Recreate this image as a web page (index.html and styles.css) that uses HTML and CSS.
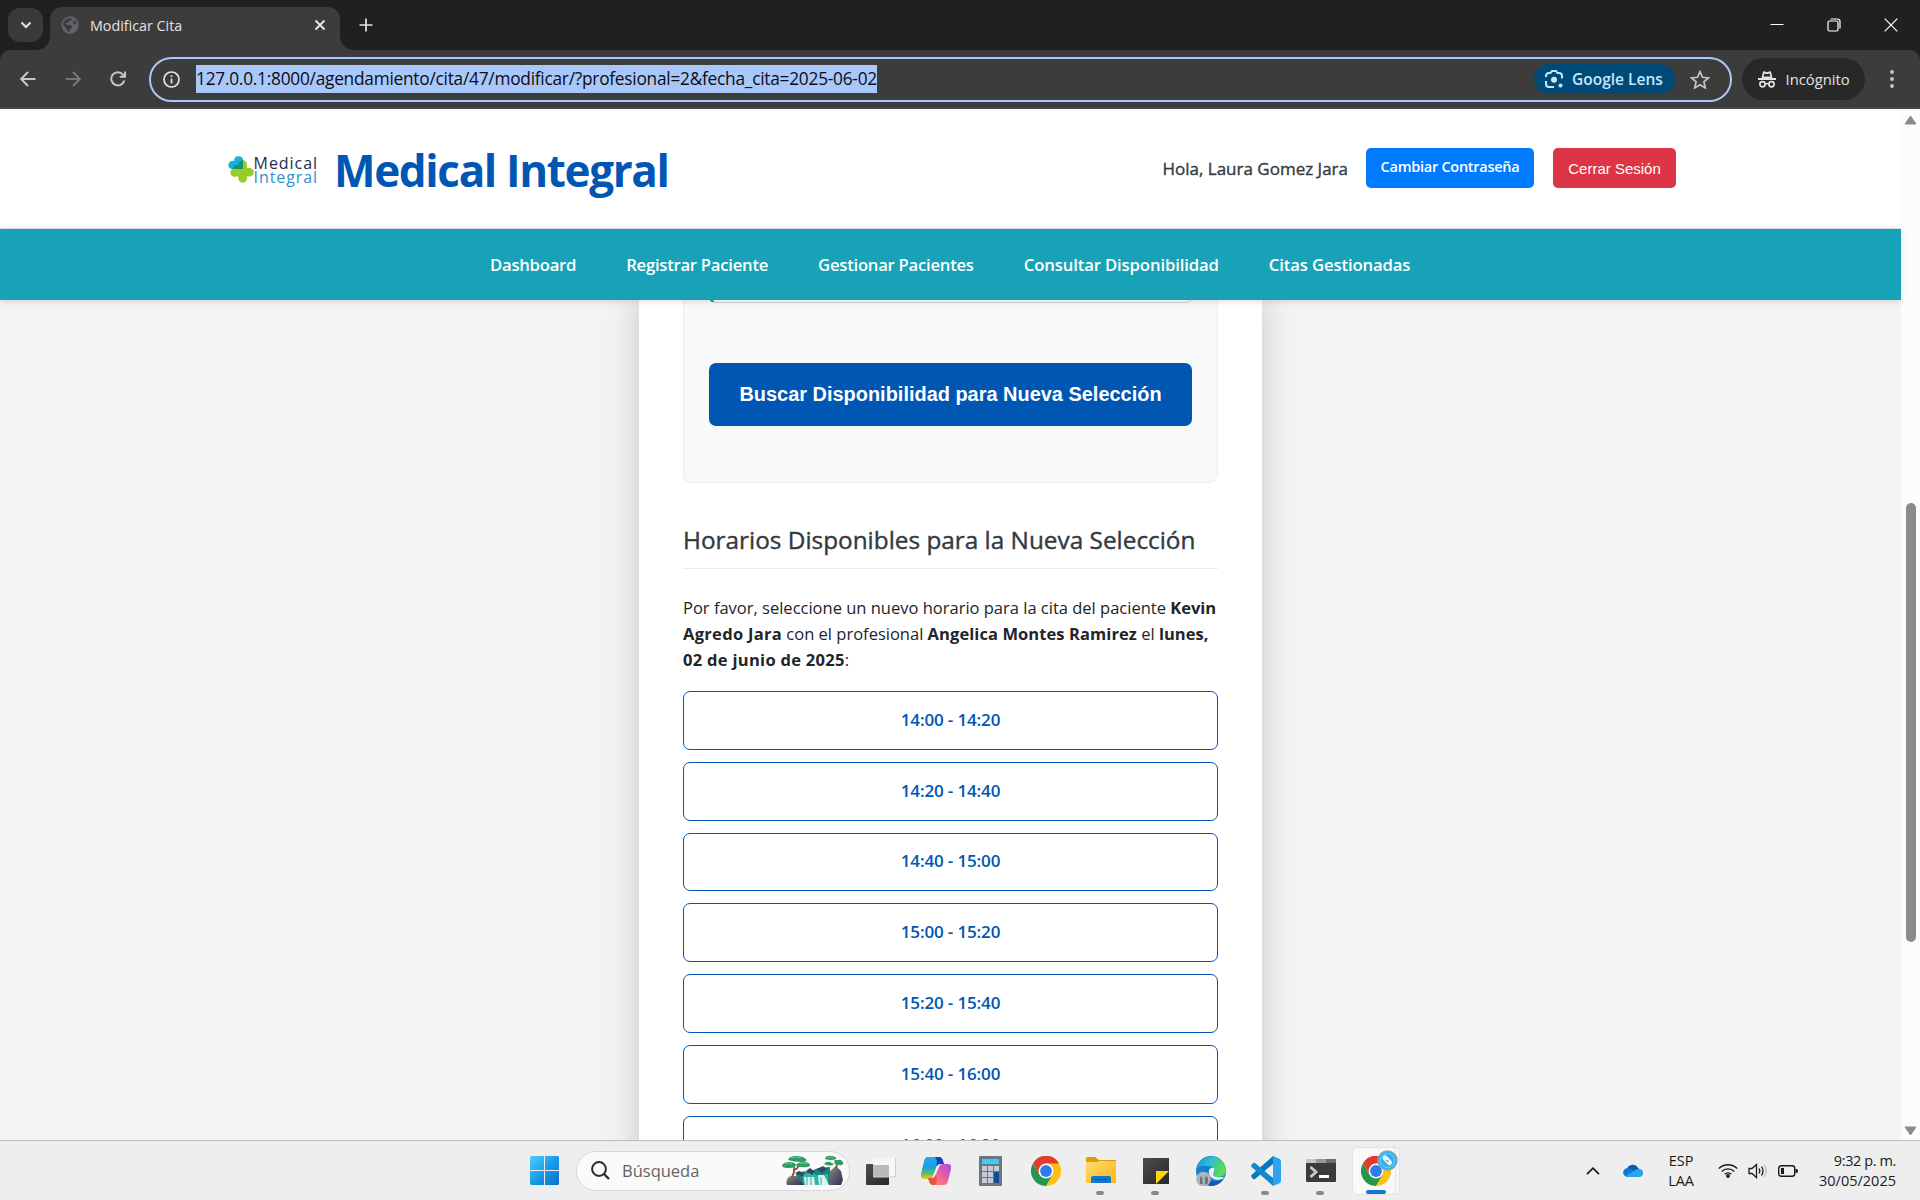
FILE: index.html
```html
<!DOCTYPE html>
<html lang="es">
<head>
<meta charset="utf-8">
<title>Modificar Cita</title>
<link rel="stylesheet" href="styles.css">
</head>
<body>
<svg width="0" height="0" class="defs">
  <defs>
    <linearGradient id="gWin" x1="0" y1="0" x2="1" y2="1"><stop offset="0" stop-color="#4fd0fd"/><stop offset=".5" stop-color="#1a9bea"/><stop offset="1" stop-color="#0470cc"/></linearGradient>
    <linearGradient id="gFold" x1="0" y1="0" x2="1" y2="1"><stop offset="0" stop-color="#ffdc6e"/><stop offset="1" stop-color="#fcb61a"/></linearGradient>
    <linearGradient id="gCopA" x1="0" y1="0" x2="0" y2="1"><stop offset="0" stop-color="#1fa8f5"/><stop offset=".45" stop-color="#1c9ee0"/><stop offset=".75" stop-color="#5cba6a"/><stop offset="1" stop-color="#f0cf1a"/></linearGradient>
    <linearGradient id="gCopB" x1="1" y1="0" x2="0" y2="1"><stop offset="0" stop-color="#a44cf0"/><stop offset=".5" stop-color="#f0609a"/><stop offset="1" stop-color="#ffa04a"/></linearGradient>
    <linearGradient id="gEdge" x1="0" y1="0" x2="1" y2=".3"><stop offset="0" stop-color="#1c93d8"/><stop offset=".5" stop-color="#2cc0d0"/><stop offset="1" stop-color="#5bdc50"/></linearGradient>
    <linearGradient id="gDark" x1="0" y1="0" x2="1" y2="1"><stop offset="0" stop-color="#4e4e4e"/><stop offset="1" stop-color="#262626"/></linearGradient>
    <linearGradient id="gRock" x1="0" y1="0" x2="1" y2="1"><stop offset="0" stop-color="#8a9a70"/><stop offset=".5" stop-color="#5c5870"/><stop offset="1" stop-color="#2e3050"/></linearGradient>
    <symbol id="chrome" viewBox="0 0 30 30">
      <path d="M15 15 2 7.5A15 15 0 0 1 28 7.5Z" fill="#e33b2e"/>
      <path d="M15 15V0A15 15 0 0 1 28 7.5 15 15 0 0 1 15 30L21.5 18.7Z" fill="#fdc013"/>
      <path d="M15 7.5H28A15 15 0 0 0 2 7.5L8.5 18.7 15 15Z" fill="#e33b2e"/>
      <path d="M2 7.5A15 15 0 0 0 15 30L21.5 18.7 15 15 8.5 18.7Z" fill="#24974a"/>
      <circle cx="15" cy="15" r="7.4" fill="#fff"/><circle cx="15" cy="15" r="5.9" fill="#2f7bed"/>
    </symbol>
  </defs>
</svg>

<div class="tabstrip">
  <button class="tab-search"><svg width="12" height="8" viewBox="0 0 12 8"><path d="M1.500 1.500 6 6l4.500-4.500" class="ln light w2"/></svg></button>
  <div class="tab">
    <svg class="favicon" width="18" height="18" viewBox="0 0 18 18"><circle cx="9" cy="9" r="8.700" fill="#5f6368"/><path d="M9 2c3 .5 2 3 0 3s-1 2-3 2-1 2 1 2 4 0 4 2-2 1-2 3-2 2-3 .5S5 12 4 11 2 9 2 8a7 7 0 0 1 7-6ZM13 4l2.500 2.500c0 2-3 2-3.500 0Z" fill="#3c3c3c"/></svg>
    <span class="tab-title">Modificar Cita</span>
    <svg class="tab-close" width="12" height="12" viewBox="0 0 12 12"><path d="m1.500 1.500 9 9m0-9-9 9" class="ln light w2"/></svg>
  </div>
  <svg class="new-tab" width="14" height="14" viewBox="0 0 14 14"><path d="M7 .5v13M.5 7h13" class="ln light w17"/></svg>
  <div class="window-buttons">
    <svg width="14" height="14" viewBox="0 0 14 14"><path d="M.5 6.500h13" stroke="#fff"/></svg>
    <svg width="14" height="14" viewBox="0 0 14 14" fill="none" stroke="#fff"><rect x="1" y="3" width="10" height="10" rx="1.500" stroke-width="1.200"/><path d="M3.500 1h7a2.500 2.500 0 0 1 2.500 2.500v7" stroke-width="1.200"/></svg>
    <svg width="14" height="14" viewBox="0 0 14 14"><path d="m.7.7 12.600 12.600M13.300.7.7 13.300" stroke="#fff" stroke-width="1.200"/></svg>
  </div>
</div>

<div class="toolbar-wrap">
<div class="toolbar">
  <svg class="nav-icon" width="16" height="16" viewBox="0 0 16 16"><path d="M15.500 8H1.500M8 1 1.200 8 8 15" class="ln soft w2"/></svg>
  <svg class="nav-icon" width="16" height="16" viewBox="0 0 16 16"><path d="M.5 8h14M8 1l6.800 7L8 15" class="ln dim w2"/></svg>
  <svg class="nav-icon" width="16" height="16" viewBox="0 0 16 16"><path d="M14.300 9.500A6.600 6.600 0 1 1 13 3.600L14.700 5.500M15 .5v5.300H9.700" class="ln soft w2"/></svg>
  <div class="omnibox">
    <svg class="info" width="17" height="17" viewBox="0 0 17 17"><circle cx="8.500" cy="8.500" r="7.500" class="ln light w17"/><path d="M8.500 7.500v5M8.500 4.300v1.800" class="ln light w17"/></svg>
    <span class="url">127.0.0.1:8000/agendamiento/cita/47/modificar/?profesional=2&amp;fecha_cita=2025-06-02</span>
    <div class="lens">
      <svg width="18" height="18" viewBox="0 0 18 18"><path d="M1 7V5.500A3 3 0 0 1 4 3h1.500L7 1h4l1.500 2H14a3 3 0 0 1 3 3v2.500M1 11v3a3 3 0 0 0 3 3h5" fill="none" stroke="#c2e7ff" stroke-width="2"/><circle cx="9" cy="9.700" r="3" fill="#c2e7ff"/><circle cx="15.500" cy="15.500" r="2" fill="#c2e7ff"/></svg>
      <span class="lens-label">Google Lens</span>
    </div>
    <svg class="star" width="20" height="19" viewBox="0 0 20 19"><path d="m10 1.700 2.500 5.600 6 .6-4.600 4 1.400 6L10 14.800 4.700 17.900l1.400-6-4.600-4 6-.6Z" fill="none" stroke="#c7c7c7" stroke-width="1.700"/></svg>
  </div>
  <div class="incognito">
    <svg width="18" height="17" viewBox="0 0 18 17"><path d="M3.500 7 5 .8q.3-.8 1.200-.5L9 1.200l2.800-.9q.9-.3 1.200.5L14.500 7Z" fill="#e3e3e3"/><path d="M6.300 2.500 9 3.300l2.700-.8.700 3H5.600Z" fill="#282828"/><path d="M0 8h18" stroke="#e3e3e3" stroke-width="2"/><circle cx="4.500" cy="13.300" r="2.600" fill="none" stroke="#e3e3e3" stroke-width="1.700"/><circle cx="13.500" cy="13.300" r="2.600" fill="none" stroke="#e3e3e3" stroke-width="1.700"/><path d="M7 13q2-1.200 4 0" fill="none" stroke="#e3e3e3" stroke-width="1.500"/></svg>
    <span class="inc-label">Incógnito</span>
  </div>
  <svg class="kebab" width="4" height="18" viewBox="0 0 4 18" fill="#c7c7c7"><circle cx="2" cy="2" r="1.900"/><circle cx="2" cy="9" r="1.900"/><circle cx="2" cy="16" r="1.900"/></svg>
</div>
</div>

<div class="viewport">
  <div class="page">
    <header class="site-header">
      <svg class="logo" width="90" height="38" viewBox="0 0 90 38">
        <g transform="translate(0 3.500)">
          <path d="M14 6q5 1 5 6v2.500h2.500a4.300 4.300 0 0 1 0 8.600H19V25a4.300 4.300 0 0 1-8.600 0v-2H8.500A4.200 4.200 0 0 1 5 15h9Z" fill="#95ce28"/>
          <path d="M6 7.500a4.600 4.600 0 0 1 9-1.500v9.500H4.500A4.300 4.300 0 0 1 .3 11.500 4.300 4.300 0 0 1 6 7.500Z" fill="#13b2de"/>
          <path d="M10.500 11q0-4 4.500-4v8.500H5q0-4.500 5.500-4.500Z" fill="#17936c"/>
        </g>
        <text x="25.600" y="19" class="logo-text" fill="#262b4c" textLength="63.500">Medical</text>
        <text x="25.600" y="33" class="logo-text" fill="#3191d2" textLength="63.500">Integral</text>
      </svg>
      <h1>Medical Integral</h1>
      <span class="hello">Hola, Laura Gomez Jara</span>
      <a class="btn btn-blue">Cambiar Contraseña</a>
      <button class="btn btn-red">Cerrar Sesión</button>
    </header>
    <nav class="site-nav">
      <a>Dashboard</a><a>Registrar Paciente</a><a>Gestionar Pacientes</a><a>Consultar Disponibilidad</a><a>Citas Gestionadas</a>
    </nav>
    <main class="main">
      <section class="card">
        <div class="form-box">
          <div class="field"></div>
          <button class="submit">Buscar Disponibilidad para Nueva Selección</button>
        </div>
        <h2>Horarios Disponibles para la Nueva Selección</h2>
        <p class="intro">Por favor, seleccione un nuevo horario para la cita del paciente <b>Kevin</b><br><b class="wide">Agredo Jara</b> con el profesional <b class="name">Angelica Montes Ramirez</b> el <b>lunes,</b><br><b class="wide">02 de junio de 2025</b>:</p>
        <div class="slots">
          <a class="slot">14:00 - 14:20</a>
          <a class="slot">14:20 - 14:40</a>
          <a class="slot">14:40 - 15:00</a>
          <a class="slot">15:00 - 15:20</a>
          <a class="slot">15:20 - 15:40</a>
          <a class="slot">15:40 - 16:00</a>
          <a class="slot">16:00 - 16:20</a>
        </div>
      </section>
    </main>
  </div>
  <div class="scrollbar">
    <svg width="13" height="10" viewBox="0 0 13 10"><path d="M6.500 1 12 9H1Z" fill="#8b8b8b" stroke="#8b8b8b" stroke-linejoin="round"/></svg>
    <div class="thumb"></div>
    <svg width="13" height="10" viewBox="0 0 13 10"><path d="M6.500 9 12 1H1Z" fill="#8b8b8b" stroke="#8b8b8b" stroke-linejoin="round"/></svg>
  </div>
</div>

<footer class="taskbar">
  <div class="app"><svg width="29" height="29" viewBox="0 0 29 29"><path d="M1 0h13v14H0V1ZM15 0h13l1 1v13H15ZM0 15h14v14H1l-1-1ZM15 15h14v13l-1 1H15Z" fill="url(#gWin)"/></svg></div>
  <div class="search">
    <svg width="19" height="19" viewBox="0 0 19 19"><circle cx="8" cy="8" r="6.900" fill="none" stroke="#2a2a2a" stroke-width="2"/><path d="m13 13 5 5" stroke="#2a2a2a" stroke-width="2.400"/></svg>
    <span class="search-label">Búsqueda</span>
    <svg class="scene" width="62" height="32" viewBox="0 0 62 32">
      <path d="M14 19q6-4 13-2l9-4 12-1v18H14Z" fill="#16877c"/>
      <path d="M20 20l10-3 6 4 10-2v11H22Z" fill="#2fb5a4"/>
      <path d="M22 22h10l1 8H23ZM36 20h6l5 10H37Z" fill="#dcf5f4"/>
      <path d="M25 22v8m4-8v8m10-8v8" stroke="#3fa79f"/>
      <path d="M13 18l4-2 5 2-1 4ZM24 16l4-3 5 4-3 3ZM35 14l6-3 4 3-5 4Z" fill="#384560"/>
      <path d="M5 30q-2-7 4-9l6 0 7 9Z" fill="url(#gRock)"/>
      <path d="M47 30l1-14 6-5 5 5 2 9-2 5Z" fill="url(#gRock)"/>
      <path d="M10 22q4-7 1-14M11 15q4 0 6-5M54 13q2-3-1-8" stroke="#7e4a30" stroke-width="1.700" fill="none"/>
      <path d="M6 5Q7 1 14 1t10 3q2 3-5 3T6 5ZM0 11q1-4 7-4t7 3q-1 3-7 3T0 11ZM14 10q2-3 8-3t6 4q-4 2-8 1-6 0-6-2ZM43 4q1-4 7-3 5 1 4 3-5 2-11 0ZM42 9q2-3 6-2l4 2q-3 3-10 0ZM52 8q2-4 7-3 4 3 1 5-5 1-8-2Z" fill="#2e9d63"/>
      <path d="M9 3q5-2 10 0M3 9q4-2 7 0M18 9q4-2 7 0M46 3q3-2 5 0" stroke="#65c98a" fill="none"/>
    </svg>
  </div>
  <div class="app"><svg width="30" height="28" viewBox="0 0 30 28"><rect x="0" y="7" width="23" height="21" rx="1" fill="url(#gDark)"/><path d="M7 1h22v19H7Z" fill="#f6f6f6"/><path d="M7 8h16v12H7Z" fill="#bababa"/><path d="M7 20h22v-.5M29.500 1v19" stroke="#cfcfcf" fill="none"/></svg></div>
  <div class="app"><svg width="30" height="28" viewBox="0 0 30 28"><path d="M7 0h11q3 0 4 4l1 3h-4q-3 0-4 4l-3 8q-1 3-4 3H3q-4 0-3-5L3 4Q4 0 7 0Z" fill="url(#gCopA)"/><path d="M14 0h4q3 0 4 4l1 3h-4q-2 0-3 2-1-2 0-5Z" fill="#1840b8"/><path d="M23 28H12q-3 0-4-4l-1-3h4q3 0 4-4l3-7q1-3 4-3h5q4 0 3 5l-3 12q-1 4-4 4Z" fill="url(#gCopB)"/><path d="M7 21h4q3 0 4-4l1 8-2 3h-2q-3 0-4-4Z" fill="#ee5340"/></svg></div>
  <div class="app"><svg width="23" height="30" viewBox="0 0 23 30"><rect width="23" height="30" rx="1" fill="#6b7683"/><path d="M3 3h17v5H3Z" fill="#3fcdf8"/><path d="M3 10h5v5H3Zm6 0h5v5H9Zm6 0h5v5h-5ZM3 16h5v5H3Zm6 0h5v5H9ZM3 22h5v5H3Zm6 0h5v5H9Z" fill="#c6cdd6"/><path d="M15 16h5v11h-5Z" fill="#124e93"/></svg></div>
  <div class="app"><svg width="30" height="30"><use href="#chrome"/></svg></div>
  <div class="app open"><svg width="30" height="27" viewBox="0 0 30 27"><path d="M0 1.500Q0 0 1.500 0H9l4 3h16q1 0 1 1v4H0Z" fill="#dd9a0c"/><path d="M0 5h11l2-1h17v22H0Z" fill="url(#gFold)"/><path d="M5 26v-5q0-2 2-2h16q2 0 2 2v5Z" fill="#1277cd"/><path d="M9 22.500h12" stroke="#0b4f96"/></svg></div>
  <div class="app open"><svg width="26" height="26" viewBox="0 0 26 26"><path d="M0 0h26v26H0Z" fill="url(#gDark)"/><path d="M13 13h13L13 26Z" fill="#fdd50b"/></svg></div>
  <div class="app"><svg width="30" height="30" viewBox="0 0 30 30"><circle cx="15" cy="15" r="15" fill="#1681cf"/><path d="M.5 12A15 15 0 0 1 30 14q0 7-8 7-5 0-5-2 2-2 1-5-1-4-6-4Q4 9 .5 12Z" fill="url(#gEdge)"/><path d="M12 12q-5 5 0 11 6 5 15 0l-1 2Q19 32 11 29 2 20 12 12Z" fill="#1358ae"/><path d="M13 14q2-3 5-2 1 3-1 7 2 3 9 2 2 0 2 1-7 4-12 0-4-3-3-8Z" fill="#eee"/><circle cx="7.500" cy="23" r="7.300" fill="#aab4bb"/><path d="M4 28v-6l1-2 1.500 2v6Zm5 1v-7l1.500-2 1.500 2v5Z" fill="#68737c"/></svg></div>
  <div class="app open"><svg width="30" height="30" viewBox="0 0 30 30"><path d="M22 0v8L4 23q-1 .5-2 0l-1.500-2q-.7-1 0-2Z" fill="#0877bd"/><path d="M22 30v-8L4 7q-1-.5-2 0L.5 9q-.7 1 0 2Z" fill="#1188cf"/><path d="M22 0l6 2.500q2 1 2 3v19q0 2-2 3L22 30Z" fill="#2ba3f2"/></svg></div>
  <div class="app open"><svg width="30" height="23" viewBox="0 0 30 23"><rect width="30" height="23" rx="1" fill="#3b3b3b"/><path d="M0 0h10v4H0Z" fill="#c4c4c4"/><path d="M10 0h10v4H10Z" fill="#999"/><path d="M20 0h10v4H20Z" fill="#6d6d6d"/><path d="m4.500 8 5.500 5-5.500 5" stroke="#ccc" stroke-width="2.800" fill="none"/><path d="M13 17.500h10" stroke="#fff" stroke-width="3"/></svg></div>
  <div class="app active">
    <svg width="30" height="30"><use href="#chrome"/></svg>
    <svg class="profile" width="21" height="21" viewBox="0 0 21 21"><circle cx="10.500" cy="10.500" r="9.500" fill="#2fb0ee" stroke="#7fa9c2" stroke-width="1.500"/><circle cx="10.500" cy="10.500" r="7" fill="none" stroke="#7fd2fa"/><path d="m8 8 4.500 4.500" stroke="#eafaff" stroke-width="5" stroke-linecap="round"/><path d="M9.500 10.300l1.500 1" stroke="#2a93d0" stroke-width="1.200" stroke-linecap="round"/></svg>
  </div>
  <div class="tray">
    <svg class="chev" width="14" height="8" viewBox="0 0 14 8"><path d="M1 7.200 7 1.200l6 6" fill="none" stroke="#1b1b1b" stroke-width="1.700"/></svg>
    <svg class="cloud" width="20" height="13" viewBox="0 0 20 13"><path d="M4 5a6 6 0 0 1 11-1l1.500 1-10 5Z" fill="#0a5cb4"/><path d="M4.500 13A4.500 4.500 0 1 1 6 4.200L14 9l-4 4Z" fill="#0f7ad4"/><path d="M3 12l9-6q2-1 4-1a4 4 0 0 1 0 8H5Z" fill="#27a4ea"/></svg>
    <div class="lang"><span>ESP</span><span>LAA</span></div>
    <svg class="wifi" width="20" height="15" viewBox="0 0 20 15"><path d="M.8 5.500a13 13 0 0 1 18.400 0M3.800 8.500a8.700 8.700 0 0 1 12.400 0M6.700 11.300a4.700 4.700 0 0 1 6.600 0" fill="none" stroke="#1b1b1b" stroke-width="1.400"/><circle cx="10" cy="13" r="1.900" fill="#1b1b1b"/></svg>
    <svg class="vol" width="20" height="16" viewBox="0 0 20 16" fill="none" stroke="#1b1b1b" stroke-width="1.300"><path d="M1 5.500h3l4.500-4v13l-4.500-4H1ZM11 5.500q1.700 2.500 0 5M13.500 3.500q3 4.500 0 9"/><path d="M16 1.500q4.500 6.500 0 13" stroke="#bdbdbd"/></svg>
    <svg class="bat" width="20" height="12" viewBox="0 0 20 12"><rect x=".7" y=".7" width="16" height="10.600" rx="2.500" fill="none" stroke="#1b1b1b" stroke-width="1.400"/><path d="M3 3h3v6H3ZM17.500 4h1q1.500 0 1.500 2t-1.500 2h-1Z" fill="#1b1b1b"/></svg>
    <div class="clock"><span class="time">9:32 p. m.</span><span>30/05/2025</span></div>
  </div>
</footer>
</body>
</html>
```
FILE: styles.css
```css
* { box-sizing: border-box; }

html, body { height: 100%; }

body {
  margin: 0;
  display: flex;
  flex-direction: column;
  overflow: hidden;
  width: 1920px;
  height: 1200px;
  background: #f3f3f3;
  color: #212529;
  font-family: "Open Sans", "Noto Sans", sans-serif;
}

button { border: 0; padding: 0; }
svg { display: block; flex: none; }
span, a, h1, h2, button { white-space: nowrap; }
.defs { position: absolute; }

.ln { fill: none; }
.light { stroke: #e3e3e3; }
.soft { stroke: #c7c7c7; }
.dim { stroke: #757575; }
.w2 { stroke-width: 2; }
.w17 { stroke-width: 1.7; }

/* Browser chrome */
.tabstrip {
  flex: none;
  display: flex;
  align-items: center;
  height: 50px;
  padding-left: 8px;
  background: #1f2120;
}
.tab-search {
  display: grid;
  place-items: center;
  width: 35px;
  height: 34px;
  border-radius: 12px;
  background: #3a3a3a;
}
.tab {
  position: relative;
  align-self: flex-end;
  display: flex;
  align-items: center;
  width: 290px;
  height: 43px;
  margin-left: 7px;
  padding: 0 14px 7px 11px;
  border-radius: 12px 12px 0 0;
  background: #3c3c3c;
}
.tab::before, .tab::after {
  content: "";
  position: absolute;
  bottom: 0;
  width: 13px;
  height: 13px;
}
.tab::before { left: -13px; background: radial-gradient(circle at 0 0, transparent 12.500px, #3c3c3c 13px); }
.tab::after { right: -13px; background: radial-gradient(circle at 100% 0, transparent 12.500px, #3c3c3c 13px); }
.tab-title { margin-left: 11px; font-size: 14.300px; color: #e3e3e3; }
.tab-close { margin-left: auto; }
.new-tab { margin-left: 18.500px; }
.window-buttons { display: flex; gap: 43px; margin-left: auto; padding-right: 22px; }

.toolbar-wrap { flex: none; background: #1f2120; }
.toolbar {
  display: flex;
  align-items: center;
  height: 59px;
  padding: 1px 22px 0 20px;
  border-radius: 11px 11px 0 0;
  border-bottom: 2px solid #484848;
  background: #3c3c3c;
}
.nav-icon { margin-right: 29px; }
.omnibox {
  display: flex;
  align-items: center;
  width: 1583px;
  height: 45px;
  margin-left: -6px;
  padding-right: 20px;
  padding-left: 12px;
  border: 2px solid #a8c7fa;
  border-radius: 23px;
}
.url {
  height: 28px;
  margin-left: 16px;
  background: #a8c7fa;
  color: #0d0d12;
  font-size: 17.300px;
  letter-spacing: -.243px;
  line-height: 28px;
}
.lens {
  display: flex;
  align-items: center;
  gap: 9px;
  height: 30px;
  width: 141px;
  margin-left: auto;
  padding-left: 11px;
  border-radius: 15px;
  background: #004a77;
  color: #c2e7ff;
}
.lens-label { font-size: 15.500px; font-weight: 600; }
.star { margin-left: 15px; }
.incognito {
  display: flex;
  align-items: center;
  gap: 9.500px;
  width: 123px;
  height: 42px;
  margin-left: 10px;
  padding-left: 16px;
  border-radius: 21px;
  background: #282828;
  color: #e3e3e3;
}
.inc-label { font-size: 14.800px; }
.kebab { margin-left: auto; margin-right: 4px; }

/* Page */
.viewport { flex: 1; min-height: 0; display: flex; }
.page { display: flex; flex-direction: column; width: 1901px; }

.site-header {
  flex: none;
  display: flex;
  align-items: center;
  height: 120px;
  padding: 0 225px 0 228px;
  border-bottom: 1px solid #dee2e6;
  background: #fff;
}
.logo-text { font: 400 16px "Open Sans", sans-serif; }
h1 {
  margin: 3px 0 0 16px;
  color: #0056b3;
  font-size: 44px;
  font-weight: 700;
  letter-spacing: -1.350px;
  line-height: 60px;
}
.hello {
  margin-left: auto;
  color: #343a40;
  font-size: 17px;
  -webkit-text-stroke: .35px #343a40;
}
.btn {
  display: flex;
  align-items: center;
  justify-content: center;
  height: 40px;
  margin-top: -2px;
  border-radius: 5px;
  color: #fff;
}
.btn-blue {
  width: 168px;
  margin-left: 18px;
  padding-bottom: 3px;
  background: #007bff;
  font-size: 14.500px;
  font-weight: 600;
  letter-spacing: -.27px;
}
.btn-red { width: 123px; margin-left: 19px; padding-top: 2px; background: #dc3545; font: 15px "Liberation Sans", sans-serif; }

.site-nav {
  position: relative;
  z-index: 1;
  flex: none;
  display: flex;
  gap: 50px;
  align-items: center;
  height: 71px;
  padding-left: 490px;
  background: #18a2b8;
  box-shadow: 0 2px 6px rgba(0, 0, 0, .12);
  color: #fff;
  font-size: 16.700px;
  font-weight: 600;
  letter-spacing: -.26px;
}
.site-nav a:nth-child(n+4) { letter-spacing: -.13px; }

.main { flex: 1; min-height: 0; overflow: hidden; }
.card {
  width: 623px;
  min-height: 900px;
  margin: 0 auto;
  padding: 0 44px;
  background: #fff;
  box-shadow: 0 0 31px rgba(0, 0, 0, .19);
}
.form-box {
  display: flow-root;
  height: 183px;
  padding: 0 25px;
  border: 1px solid #e9ecef;
  border-top: 0;
  border-radius: 0 0 9px 9px;
  background: #f8f9fb;
}
.field {
  height: 20px;
  margin-top: -17px;
  border: 1px solid #ced4da;
  border-left: 4px solid #28a745;
  border-radius: 6px;
  background: #fff;
}
.submit {
  display: block;
  width: 483px;
  height: 63px;
  margin: 60px 0 0;
  border-radius: 7px;
  background: #0056b3;
  color: #fff;
  font: 700 19.950px "Liberation Sans", sans-serif;
}
h2 {
  height: 86px;
  margin: 0;
  padding-top: 40px;
  border-bottom: 1px solid #e9ecef;
  color: #343a40;
  font-size: 24.350px;
  font-weight: 400;
  line-height: 34px;
  -webkit-text-stroke: .4px #343a40;
}
.intro { margin: 26px 0 18px; font-size: 16.500px; line-height: 26px; white-space: nowrap; }
.intro b { font-weight: 700; }
.intro .wide { letter-spacing: .3px; }
.intro .name { letter-spacing: .08px; }
.slots { display: grid; gap: 12px; }
.slot {
  display: flex;
  align-items: center;
  justify-content: center;
  height: 58.800px;
  padding-bottom: 2px;
  border: 1px solid #0056b3;
  border-radius: 7px;
  color: #0056b3;
  font-size: 17px;
  font-weight: 600;
  letter-spacing: -.15px;
}

.scrollbar {
  display: flex;
  flex-direction: column;
  align-items: center;
  width: 19px;
  padding: 6px 0 4px;
  background: #fcfcfc;
}
.thumb { width: 10px; height: 439px; margin: 378px 0 auto; border-radius: 5px; background: #8b8b8b; }

/* Taskbar */
.taskbar {
  flex: none;
  display: flex;
  align-items: center;
  height: 60px;
  padding-left: 517px;
  border-top: 1px solid #bdbdbd;
  background: #eee;
}
.app { position: relative; display: grid; place-items: center; width: 55px; height: 48px; }
.app.open::after, .app.active::after {
  content: "";
  position: absolute;
  bottom: 0;
  left: 23px;
  width: 8px;
  height: 4px;
  border-radius: 2px;
  background: #8a8a8a;
}
.app.active {
  width: 44px;
  margin: 0 0 0 4px;
  border: 1px solid #e2e2e2;
  border-radius: 5px;
  background: #f9f9f9;
  box-shadow: 4px 0 0 -1px #f6f6f6, 4px 0 0 0 #e2e2e2;
  padding-left: 4px;
}
.app.active::after { left: 13px; width: 20px; background: #0f78d4; }
.profile { position: absolute; left: 24px; top: 2px; }
.search {
  display: flex;
  align-items: center;
  width: 274px;
  height: 40px;
  margin: 0 3px 0 4px;
  padding: 0 5px 0 14px;
  border: 1px solid #d8d8d8;
  border-radius: 20px;
  background: #fafafa;
}
.search-label { margin-left: 12px; font-size: 16.500px; color: #636363; }
.scene { margin-left: auto; }
.tray {
  display: flex;
  align-items: center;
  margin-left: auto;
  padding-right: 24px;
  color: #1b1b1b;
  font-size: 14.500px;
  line-height: 20px;
}
.cloud { margin-left: 23px; }
.lang { display: grid; justify-items: center; margin-left: 25.500px; }
.wifi { margin-left: 24px; }
.vol { margin-left: 10px; }
.bat { margin-left: 10px; }
.clock { display: grid; justify-items: end; margin-left: 21px; }
.time { letter-spacing: -.4px; }
```
